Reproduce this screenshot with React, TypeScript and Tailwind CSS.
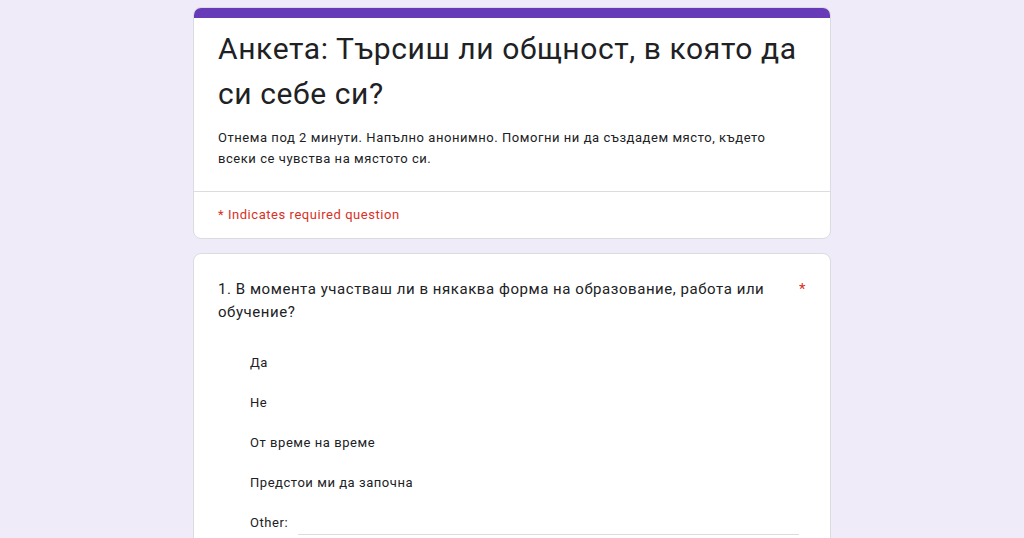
export default function App() {
  const options = ['Да', 'Не', 'От време на време', 'Предстои ми да започна'];

  return (
    <div className="h-[538px] overflow-hidden bg-[#f0ebf8] pt-[7px] font-['Roboto','Noto_Sans',sans-serif] tracking-[0.55px] text-[#202124]">
      <div className="mx-auto flex w-[638px] flex-col gap-[14px]">
        {/* Header card */}
        <div className="overflow-hidden rounded-lg border border-[#dadce0] bg-white">
          <div className="h-[10px] bg-[#673ab7]" />
          <div className="px-6 pt-[8px] pb-[22px]">
            <h1 className="text-[30px] leading-[45px] tracking-[0.6px] text-[#202124]">
              Анкета: Търсиш ли общност, в която да си себе си?
            </h1>
            <p className="mt-[11px] text-[13px] leading-[21px] text-[#202124]">
              Отнема под 2 минути. Напълно анонимно. Помогни ни да създадем място, където всеки се чувства на мястото си.
            </p>
          </div>
          <div className="border-t border-[#dadce0] px-6 pt-[10px] pb-[12px]">
            <span className="text-[13px] text-[#d93025]">* Indicates required question</span>
          </div>
        </div>

        {/* Question card */}
        <div className="rounded-lg border border-[#dadce0] bg-white px-6 pt-[24px] pb-6">
          <div className="flex items-start">
            <p className="w-[570px] text-[15px] leading-[23px]">
              1. В момента участваш ли в някаква форма на образование, работа или обучение?
            </p>
            <span className="ml-auto text-[15px] leading-[23px] text-[#d93025]">*</span>
          </div>
          <div className="mt-[19px] flex flex-col pl-8">
            {options.map((o) => (
              <div key={o} className="flex h-10 items-center text-[13px]">
                {o}
              </div>
            ))}
            <div className="flex h-10 items-center text-[13px]">
              <span>Other:</span>
              <div className="ml-[10px] mr-[7px] mt-[22px] h-px flex-1 bg-[#dadce0]" />
            </div>
          </div>
        </div>
      </div>
    </div>
  );
}
